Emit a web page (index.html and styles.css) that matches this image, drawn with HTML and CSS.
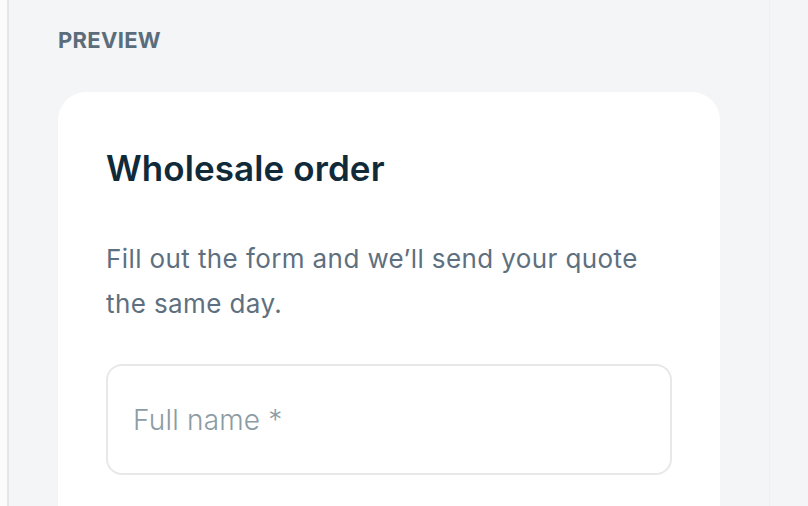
FILE: index.html
```html
<!DOCTYPE html>
<html lang="en">
<head>
<meta charset="utf-8">
<title>Preview</title>
<link rel="stylesheet" href="styles.css">
</head>
<body>
<div class="layout">
  <div class="gutter"></div>
  <main class="preview-panel">
    <div class="panel-label">PREVIEW</div>
    <section class="card">
      <h1 class="card-title">Wholesale order</h1>
      <p class="card-text">Fill out the form and we’ll send your quote the same day.</p>
      <div class="field">
        <span class="placeholder">Full name *</span>
      </div>
    </section>
  </main>
  <aside class="side"></aside>
</div>
</body>
</html>
```

FILE: styles.css
```css
html, body {
  margin: 0;
  padding: 0;
  height: 100%;
  overflow: hidden;
}
body {
  font-family: Inter, "Noto Sans", sans-serif;
  background: #f3f5f7;
}
.layout {
  display: flex;
  height: 506px;
  overflow: hidden;
}
.gutter {
  width: 7px;
  background: #fbfbfc;
  border-right: 2px solid #e4e7ea;
  flex: none;
}
.preview-panel {
  flex: 1;
  background: #f3f5f7;
  padding: 27px 0 0 49px;
  box-sizing: border-box;
  overflow: hidden;
}
.side {
  width: 38px;
  flex: none;
  background: #f4f5f7;
  border-left: 1px solid #eef0f2;
}
.panel-label {
  font-size: 22px;
  font-weight: 700;
  color: #5b6d7a;
  letter-spacing: 0.3px;
  line-height: 26px;
}
.card {
  margin-top: 39px;
  width: 662px;
  background: #ffffff;
  border-radius: 28px;
  padding: 52px 48px 80px;
  box-sizing: border-box;
}
.card-title {
  margin: 0;
  font-size: 35px;
  font-weight: 600;
  color: #102a3a;
  line-height: 48px;
  letter-spacing: 0.1px;
}
.card-text {
  margin: 44px 0 0;
  font-size: 26px;
  font-weight: 400;
  line-height: 45px;
  color: #5e7080;
  letter-spacing: 0.4px;
}
.field {
  margin-top: 38px;
  width: 566px;
  height: 111px;
  border: 2px solid #e6e8ea;
  border-radius: 16px;
  box-sizing: border-box;
  display: flex;
  align-items: center;
  padding-left: 25px;
}
.placeholder {
  font-size: 28px;
  font-weight: 300;
  color: #8c9ca4;
  letter-spacing: 0.2px;
}
```
